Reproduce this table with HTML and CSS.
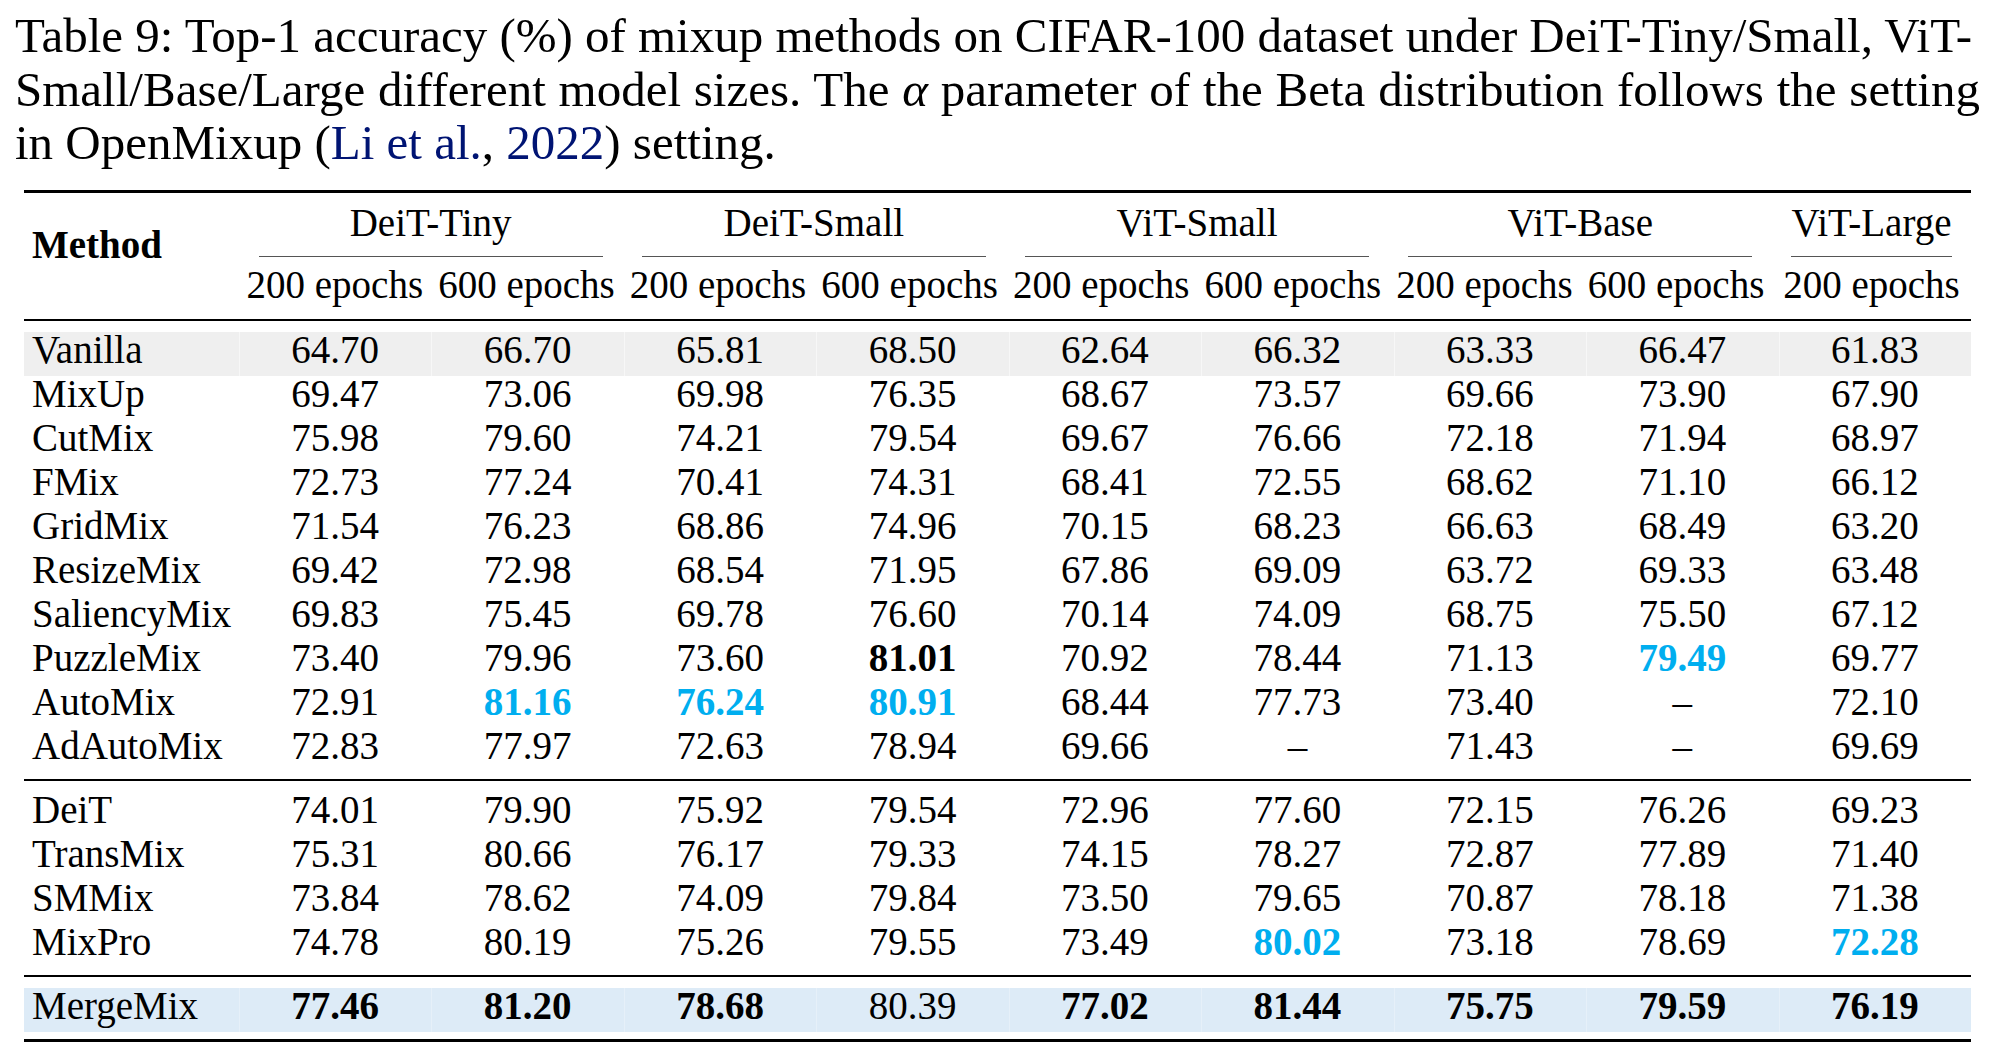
FILE: index.html
```html
<!DOCTYPE html>
<html lang="en">
<head>
<meta charset="utf-8">
<title>Table 9</title>
<link rel="stylesheet" href="styles.css">
</head>
<body>
<div class="page">
  <p class="caption">
    <span class="cap-line cap-line-1">Table 9: Top-1 accuracy (%) of mixup methods on CIFAR-100 dataset under DeiT-Tiny/Small, ViT-</span>
    <span class="cap-line cap-line-2">Small/Base/Large different model sizes. The <i class="math">α</i> parameter of the Beta distribution follows the setting</span>
    <span class="cap-line cap-line-3">in OpenMixup (<a class="cite">Li et al.</a>, <a class="cite">2022</a>) setting.</span>
  </p>

  <div class="table">
    <div class="thead">
      <div class="method-head">Method</div>
      <div class="group span2"><span class="group-title">DeiT-Tiny</span></div>
      <div class="group span2"><span class="group-title">DeiT-Small</span></div>
      <div class="group span2"><span class="group-title">ViT-Small</span></div>
      <div class="group span2"><span class="group-title">ViT-Base</span></div>
      <div class="group"><span class="group-title">ViT-Large</span></div>
      <div class="sub">200 epochs</div>
      <div class="sub">600 epochs</div>
      <div class="sub">200 epochs</div>
      <div class="sub">600 epochs</div>
      <div class="sub">200 epochs</div>
      <div class="sub">600 epochs</div>
      <div class="sub">200 epochs</div>
      <div class="sub">600 epochs</div>
      <div class="sub">200 epochs</div>
    </div>

    <div class="tbody">
      <div class="row shade-gray"><div class="name">Vanilla</div><div class="num">64.70</div><div class="num">66.70</div><div class="num">65.81</div><div class="num">68.50</div><div class="num">62.64</div><div class="num">66.32</div><div class="num">63.33</div><div class="num">66.47</div><div class="num">61.83</div></div>
      <div class="row"><div class="name">MixUp</div><div class="num">69.47</div><div class="num">73.06</div><div class="num">69.98</div><div class="num">76.35</div><div class="num">68.67</div><div class="num">73.57</div><div class="num">69.66</div><div class="num">73.90</div><div class="num">67.90</div></div>
      <div class="row"><div class="name">CutMix</div><div class="num">75.98</div><div class="num">79.60</div><div class="num">74.21</div><div class="num">79.54</div><div class="num">69.67</div><div class="num">76.66</div><div class="num">72.18</div><div class="num">71.94</div><div class="num">68.97</div></div>
      <div class="row"><div class="name">FMix</div><div class="num">72.73</div><div class="num">77.24</div><div class="num">70.41</div><div class="num">74.31</div><div class="num">68.41</div><div class="num">72.55</div><div class="num">68.62</div><div class="num">71.10</div><div class="num">66.12</div></div>
      <div class="row"><div class="name">GridMix</div><div class="num">71.54</div><div class="num">76.23</div><div class="num">68.86</div><div class="num">74.96</div><div class="num">70.15</div><div class="num">68.23</div><div class="num">66.63</div><div class="num">68.49</div><div class="num">63.20</div></div>
      <div class="row"><div class="name">ResizeMix</div><div class="num">69.42</div><div class="num">72.98</div><div class="num">68.54</div><div class="num">71.95</div><div class="num">67.86</div><div class="num">69.09</div><div class="num">63.72</div><div class="num">69.33</div><div class="num">63.48</div></div>
      <div class="row"><div class="name">SaliencyMix</div><div class="num">69.83</div><div class="num">75.45</div><div class="num">69.78</div><div class="num">76.60</div><div class="num">70.14</div><div class="num">74.09</div><div class="num">68.75</div><div class="num">75.50</div><div class="num">67.12</div></div>
      <div class="row"><div class="name">PuzzleMix</div><div class="num">73.40</div><div class="num">79.96</div><div class="num">73.60</div><div class="num best">81.01</div><div class="num">70.92</div><div class="num">78.44</div><div class="num">71.13</div><div class="num second">79.49</div><div class="num">69.77</div></div>
      <div class="row"><div class="name">AutoMix</div><div class="num">72.91</div><div class="num second">81.16</div><div class="num second">76.24</div><div class="num second">80.91</div><div class="num">68.44</div><div class="num">77.73</div><div class="num">73.40</div><div class="num">–</div><div class="num">72.10</div></div>
      <div class="row"><div class="name">AdAutoMix</div><div class="num">72.83</div><div class="num">77.97</div><div class="num">72.63</div><div class="num">78.94</div><div class="num">69.66</div><div class="num">–</div><div class="num">71.43</div><div class="num">–</div><div class="num">69.69</div></div>
    </div>

    <div class="tbody">
      <div class="row"><div class="name">DeiT</div><div class="num">74.01</div><div class="num">79.90</div><div class="num">75.92</div><div class="num">79.54</div><div class="num">72.96</div><div class="num">77.60</div><div class="num">72.15</div><div class="num">76.26</div><div class="num">69.23</div></div>
      <div class="row"><div class="name">TransMix</div><div class="num">75.31</div><div class="num">80.66</div><div class="num">76.17</div><div class="num">79.33</div><div class="num">74.15</div><div class="num">78.27</div><div class="num">72.87</div><div class="num">77.89</div><div class="num">71.40</div></div>
      <div class="row"><div class="name">SMMix</div><div class="num">73.84</div><div class="num">78.62</div><div class="num">74.09</div><div class="num">79.84</div><div class="num">73.50</div><div class="num">79.65</div><div class="num">70.87</div><div class="num">78.18</div><div class="num">71.38</div></div>
      <div class="row"><div class="name">MixPro</div><div class="num">74.78</div><div class="num">80.19</div><div class="num">75.26</div><div class="num">79.55</div><div class="num">73.49</div><div class="num second">80.02</div><div class="num">73.18</div><div class="num">78.69</div><div class="num second">72.28</div></div>
    </div>

    <div class="tbody tbody-last">
      <div class="row shade-blue"><div class="name">MergeMix</div><div class="num best">77.46</div><div class="num best">81.20</div><div class="num best">78.68</div><div class="num">80.39</div><div class="num best">77.02</div><div class="num best">81.44</div><div class="num best">75.75</div><div class="num best">79.59</div><div class="num best">76.19</div></div>
    </div>
  </div>
</div>
</body>
</html>
```

FILE: styles.css
```css
html, body {
  margin: 0;
  padding: 0;
  background: #ffffff;
}

body {
  font-family: "Liberation Serif", "Times New Roman", serif;
  color: #000000;
}

.page {
  width: 1994px;
  padding: 9px 0 0 15px;
  box-sizing: border-box;
}

/* ---------- caption ---------- */
.caption {
  width: 1965px;
  margin: 0;
  font-size: 49px;
  line-height: 53.5px;
}

.cap-line {
  display: block;
  white-space: normal;
}

.cap-line-1 {
  text-align: justify;
  text-align-last: justify;
  word-spacing: -0.08em;
  margin-right: 8px;
}

.cap-line-2 {
  text-align: justify;
  text-align-last: justify;
  word-spacing: -0.04em;
}

.cap-line-3 {
  text-align: left;
}

.math {
  font-style: italic;
}

.cite {
  color: #001473;
  text-decoration: none;
}

/* ---------- table ---------- */
.table {
  width: 1947px;
  margin: 20.5px 0 0 9px;
  border-top: 3px solid #000;
  font-size: 39px;
}

.thead,
.row {
  display: grid;
  grid-template-columns: 215px repeat(9, 1fr);
}

.thead {
  grid-template-rows: auto auto;
  border-bottom: 2px solid #000;
}

.method-head {
  grid-row: 1 / span 2;
  grid-column: 1;
  font-weight: bold;
  line-height: 44px;
  padding: 29.8px 8px 0;
}

.group {
  grid-row: 1;
  padding-top: 7.5px;
  text-align: center;
  white-space: nowrap;
}

.span2 {
  grid-column: span 2;
}

.group-title {
  display: block;
  margin: 0 19.5px;
  line-height: 44px;
  padding-bottom: 11.5px;
  border-bottom: 1px solid #555;
}

.sub {
  grid-row: 2;
  line-height: 44px;
  padding: 6px 0 11.5px;
  text-align: center;
  white-space: nowrap;
}

.tbody {
  padding: 11.5px 0 6.5px;
  border-bottom: 2px solid #000;
}

.tbody-last {
  border-bottom: 3px solid #000;
}

.row > div {
  line-height: 36px;
  padding-bottom: 8px;
  white-space: nowrap;
}

.name {
  padding-left: 8px;
  text-align: left;
}

.num {
  text-align: center;
}

.best {
  font-weight: bold;
}

.second {
  font-weight: bold;
  color: #00aeef;
}

.shade-gray {
  background: #efefef;
}

.shade-gray > .num {
  box-shadow: inset 1px 0 0 #f7f7f7;
}

.shade-blue {
  background: #ddebf7;
}

.shade-blue > .num {
  box-shadow: inset 1px 0 0 #e6f0f9;
}
```
